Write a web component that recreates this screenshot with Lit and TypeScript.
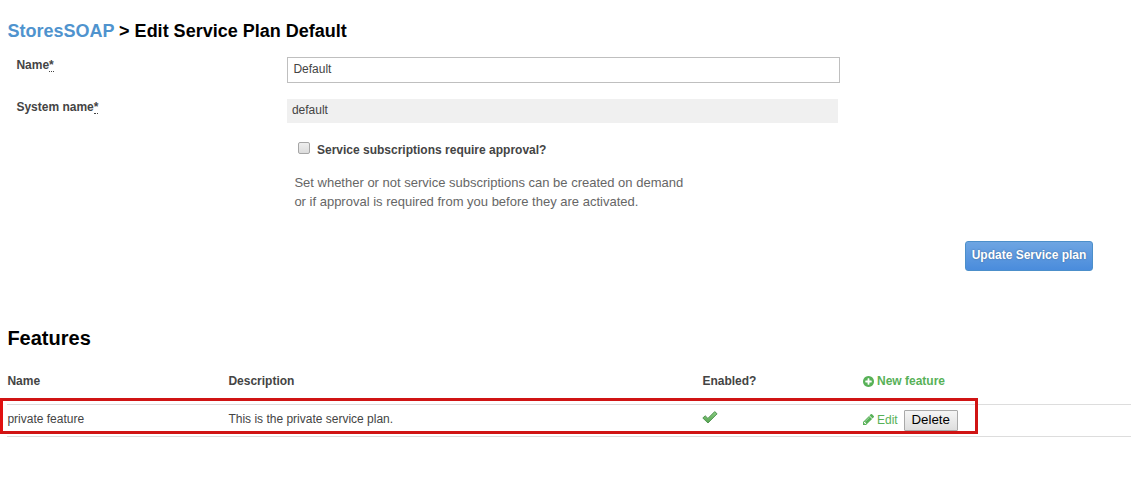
import { LitElement, html, css, svg } from "lit";
import { customElement } from "lit/decorators.js";

const plusIcon = svg`<path fill="currentColor" d="M1216 832V704q0-26-19-45t-45-19H896V384q0-26-19-45t-45-19H704q-26 0-45 19t-19 45v256H384q-26 0-45 19t-19 45v128q0 26 19 45t45 19h256v256q0 26 19 45t45 19h128q26 0 45-19t19-45V896h256q26 0 45-19t19-45zm320-64q0 209-103 385.5T1153.5 1433 768 1536t-385.5-103T103 1153.5 0 768t103-385.5T382.5 103 768 0t385.5 103T1433 382.5 1536 768z"/>`;
const pencilIcon = svg`<path fill="currentColor" d="M491 1536l91-91-235-235-91 91v107h128v128h107zm523-928q0-22-22-22-10 0-17 7l-542 542q-7 7-7 17 0 22 22 22 10 0 17-7l542-542q7-7 7-17zm-54-192l416 416-832 832h-416v-416zm683 96q0 53-37 90l-166 166-416-416 166-165q36-38 90-38 53 0 91 38l235 234q37 39 37 91z"/>`;

@customElement("plan-form")
class PlanForm extends LitElement {
  static styles = css`
    :host { display: block; padding: 0 0 0 9px; }
    .row { display: grid; grid-template-columns: 271px 553px; align-items: start; }
    .name { height: 42px; }
    .label { font-weight: bold; line-height: 20px; }
    .req { text-decoration: none; border-bottom: 1px dotted #444; display: inline-block; line-height: 12px; }
    .input { box-sizing: border-box; width: 553px; height: 26px; border: 1px solid #bfbfbf; padding: 0 5px 2px;
      margin-top: 2px; font: 12px/22px "Liberation Sans", Arial, sans-serif; color: #444; outline: none; background: #fff; border-radius: 0; }
    .text { box-sizing: border-box; width: 551px; height: 24px; margin-top: 2px; padding: 0 4.5px; background: #f0f0f0; line-height: 22px; }
    .check { display: flex; align-items: center; gap: 7px; margin: 17px 0 0 281.6px; line-height: 20px; font-weight: bold; }
    .box { box-sizing: border-box; width: 12px; height: 12px; margin-top: -4px; border: 1px solid #a6a6a6; border-radius: 2px;
      background: linear-gradient(#eee, #dcdcdc); }
    .hint { margin: 13px 0 0 278px; font-size: 13px; line-height: 19px; color: #666; }
    .actions { display: flex; justify-content: flex-end; padding: 30px 38px 0 0; }
    .submit { box-sizing: border-box; width: 128px; height: 30px; padding: 0 0 2px; border: 1px solid #4c8fca; border-radius: 3px;
      background: linear-gradient(#6ea5e2, #4a8cdc); color: #fff; font: bold 12px "Liberation Sans", Arial, sans-serif;
      text-shadow: 0 0 2px rgba(0, 0, 0, .35); white-space: nowrap; }
  `;
  render() {
    return html`
      <div class="row name">
        <div class="label">Name<abbr class="req">*</abbr></div>
        <input class="input" .value=${"Default"} />
      </div>
      <div class="row">
        <div class="label">System name<abbr class="req">*</abbr></div>
        <div class="text">default</div>
      </div>
      <div class="check"><span class="box"></span><span>Service subscriptions require approval?</span></div>
      <div class="hint">Set whether or not service subscriptions can be created on demand<br />or if approval is required from you before they are activated.</div>
      <div class="actions"><button class="submit">Update Service plan</button></div>
    `;
  }
}

@customElement("feature-table")
class FeatureTable extends LitElement {
  static styles = css`
    :host { display: block; position: relative; }
    .line { display: grid; grid-template-columns: 221px 474px 161px 1fr; box-sizing: border-box; border-bottom: 1px solid #ddd; }
    .head { height: 34px; font-weight: bold; line-height: 20px; }
    .item { height: 32px; line-height: 28px; }
    .link { display: flex; align-items: center; color: #57b157; }
    .new { gap: 2.6px; height: 20px; }
    .edit { gap: 2.6px; height: 29px; }
    .ops { display: flex; }
    .tick { margin-top: 5px; display: block; }
    .delete { box-sizing: border-box; width: 54px; height: 21px; margin: 5px 0 0 6px; padding: 0 0 2px; color: #000;
      border: 1px solid #a9a9a9; border-radius: 1px; background: linear-gradient(#f5f5f5, #dedede);
      font: 13.333px/17px "Liberation Sans", Arial, sans-serif; }
    .mark { position: absolute; left: -7px; top: 27px; width: 978px; height: 36px; box-sizing: border-box; border: 3px solid #d01414; border-left-color: #e01010; pointer-events: none; }
  `;
  render() {
    return html`
      <div class="line head">
        <span>Name</span><span>Description</span><span>Enabled?</span>
        <span class="link new"><svg width="11" height="11" viewBox="0 0 1536 1536">${plusIcon}</svg>New feature</span>
      </div>
      <div class="line item">
        <span>private feature</span><span>This is the private service plan.</span>
        <span><svg class="tick" width="16" height="16" viewBox="0 0 16 16">
          <defs><linearGradient id="g" x1="0" y1="0" x2="0" y2="1"><stop offset="0" stop-color="#8bcd83" /><stop offset="1" stop-color="#55a550" /></linearGradient></defs>
          <path d="M0.8 8L3.2 5.8L5.9 8.4L12.7 1.6L15.1 3.8L6 13Z" fill="url(#g)" stroke="#4a8f49" stroke-width="0.9" stroke-linejoin="round" />
        </svg></span>
        <span class="ops">
          <span class="link edit"><svg width="11" height="11" viewBox="128 149 1515 1515">${pencilIcon}</svg>Edit</span>
          <button class="delete">Delete</button>
        </span>
      </div>
      <div class="mark"></div>
    `;
  }
}

@customElement("app-root")
class AppRoot extends LitElement {
  static styles = css`
    :host { display: block; box-sizing: border-box; height: 480px; overflow: hidden; padding: 19px 0 0 7.4px; background: #fff;
      font: 12px "Liberation Sans", Arial, sans-serif; color: #444; }
    .title { margin: 0 0 12px; font-size: 18px; line-height: 24px; color: #000; }
    .crumb { color: #4f93ce; }
    .section { margin: 54px 0 20px; font-size: 20px; line-height: 26px; color: #000; }
  `;
  render() {
    return html`
      <h2 class="title"><span class="crumb">StoresSOAP</span> &gt; Edit Service Plan Default</h2>
      <plan-form></plan-form>
      <h3 class="section">Features</h3>
      <feature-table></feature-table>
    `;
  }
}
